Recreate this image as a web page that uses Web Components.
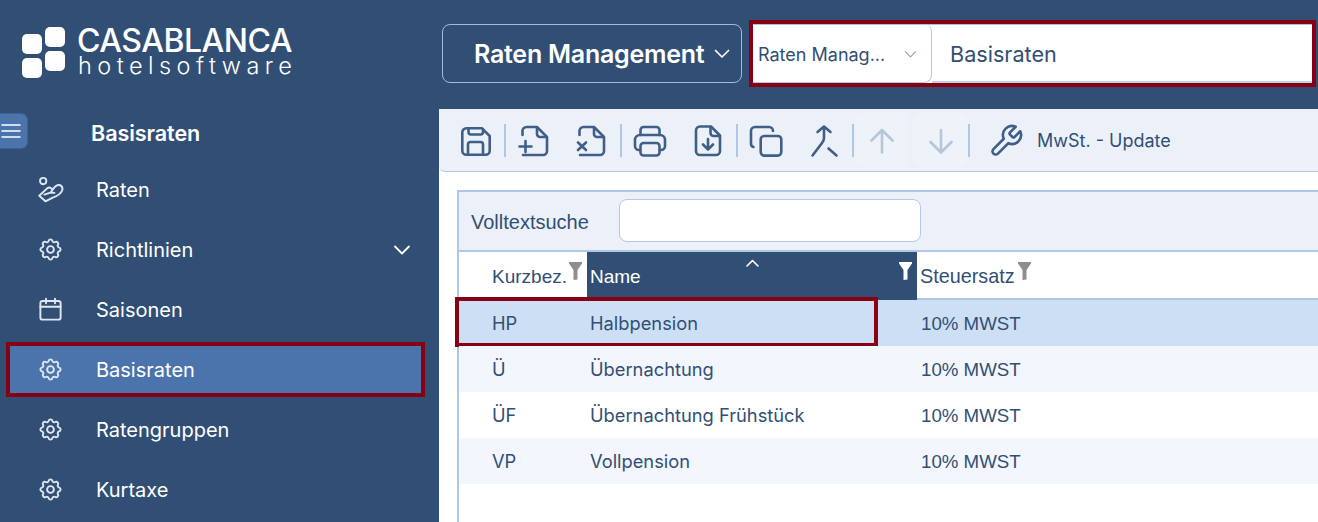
<!DOCTYPE html>
<html lang="de"><head><meta charset="utf-8"><title>Basisraten</title>
<style>
html,body{margin:0;height:100%;overflow:hidden}
body{background:#314f75;font-family:Inter,"Noto Sans",sans-serif;color:#314f75}
cb-app{height:522px}
</style></head><body>
<cb-app>
  <cb-sidebar slot="side">
    <cb-nav icon="hand">Raten</cb-nav>
    <cb-nav icon="gear" expand>Richtlinien</cb-nav>
    <cb-nav icon="cal">Saisonen</cb-nav>
    <cb-nav icon="gear" active>Basisraten</cb-nav>
    <cb-nav icon="gear">Ratengruppen</cb-nav>
    <cb-nav icon="gear">Kurtaxe</cb-nav>
  </cb-sidebar>
  <cb-topbar slot="top"></cb-topbar>
  <cb-toolbar slot="tools"></cb-toolbar>
  <cb-grid slot="main">
    <cb-row cells='["HP","Halbpension","10% MWST"]' selected marked></cb-row>
    <cb-row cells='["Ü","Übernachtung","10% MWST"]' tint></cb-row>
    <cb-row cells='["ÜF","Übernachtung Frühstück","10% MWST"]'></cb-row>
    <cb-row cells='["VP","Vollpension","10% MWST"]' tint></cb-row>
  </cb-grid>
</cb-app>
<script>
const svg=(w,h,vb,body,sw=2)=>`<svg width="${w}" height="${h}" viewBox="${vb}" fill="none" stroke="currentColor" stroke-width="${sw}" stroke-linecap="round" stroke-linejoin="round">${body}</svg>`;
const GEAR='<path d="M10.325 4.317c.426-1.756 2.924-1.756 3.35 0a1.724 1.724 0 0 0 2.573 1.066c1.543-.94 3.31.826 2.37 2.37a1.724 1.724 0 0 0 1.065 2.572c1.756.426 1.756 2.924 0 3.35a1.724 1.724 0 0 0-1.066 2.573c.94 1.543-.826 3.31-2.37 2.37a1.724 1.724 0 0 0-2.572 1.065c-.426 1.756-2.924 1.756-3.35 0a1.724 1.724 0 0 0-2.573-1.066c-1.543.94-3.31-.826-2.37-2.37a1.724 1.724 0 0 0-1.065-2.572c-1.756-.426-1.756-2.924 0-3.35a1.724 1.724 0 0 0 1.066-2.573c-.94-1.543.826-3.31 2.37-2.37 1 .608 2.296.07 2.572-1.065z"/><circle cx="12" cy="12" r="3"/>';
const ICONS={
 gear:GEAR,
 cal:'<rect x="3" y="4.5" width="18" height="16.5" rx="2"/><path d="M3 9.5h18M8 2.5v4M16 2.5v4"/>',
 hand:'<circle cx="5.5" cy="4.5" r="2.8"/><path d="M2 17.5L9 11q2-1.500 3.500-.2L14 12q3-4.500 6-4 3.500 1.200 2.300 5-1.800 4-8.300 6.200l-6.500 3.300z"/><path d="M6.500 16.5l5.500-1.800 2-2.700M12 14.7l3.500.3"/>'
};
const def=(name,cls)=>customElements.define(name,cls);
class Base extends HTMLElement{
  render(html){ if(!this.shadowRoot) this.attachShadow({mode:'open'}); this.shadowRoot.innerHTML=html; }
}
def('cb-app',class extends Base{connectedCallback(){this.render(`<style>
:host{display:grid;grid-template-columns:439px 1fr;grid-template-rows:109px 1fr;height:522px;overflow:hidden}
.side{grid-row:1 / 3}
.work{display:flex;flex-direction:column;min-width:0;background:#fff;overflow:hidden}
.top{min-width:0}
</style><div class="side"><slot name="side"></slot></div><div class="top"><slot name="top"></slot></div>
<div class="work"><slot name="tools"></slot><slot name="main"></slot></div>`)}});

def('cb-logo',class extends Base{connectedCallback(){this.render(`<style>
:host{display:flex;align-items:flex-start;box-sizing:border-box;height:113px;padding:27px 0 0 22px;color:#fff}
.mark{display:flex;gap:3px;width:43px;flex:none}
.mark div{display:flex;flex-direction:column;gap:4px}
.mark div:first-child{margin-top:7px}
.mark i{background:#fff;border-radius:5px;display:block;width:20px;height:20px}
.col{display:flex;flex-direction:column;margin:0 0 0 12px}
.l1{font-size:32px;font-weight:500;line-height:28px;letter-spacing:-.5px;white-space:nowrap}
.l2{font-size:23.5px;font-weight:300;line-height:24px;letter-spacing:5.45px;white-space:nowrap;margin-top:-1px;margin-left:1px}
</style><div class="mark"><div><i></i><i></i></div><div><i></i><i></i></div></div>
<div class="col"><span class="l1">CASABLANCA</span><span class="l2">hotelsoftware</span></div>`)}});

def('cb-sidebar',class extends Base{connectedCallback(){this.render(`<style>
:host{display:block;height:522px;background:#314f75;overflow:hidden;color:#fff}
.head{display:flex;align-items:center;height:36px}
.burger{width:28px;height:36px;box-sizing:border-box;background:#4c74ac;border:1px solid #3f6291;border-left:0;border-radius:0 7px 7px 0;display:flex;align-items:center;padding-left:1px;color:#fff}
.title{margin-left:63px;font-size:21.6px;font-weight:600;letter-spacing:-.1px;line-height:24px;margin-top:4px}
nav{display:flex;flex-direction:column;gap:5px;margin-top:13px}
</style><cb-logo></cb-logo>
<div class="head"><div class="burger">${svg(20,20,'0 0 20 20','<path d="M1 4h18M1 10h18M1 16h18"/>',1.6)}</div><div class="title">Basisraten</div></div>
<nav><slot></slot></nav>`)}});

def('cb-nav',class extends Base{connectedCallback(){
 const ic=this.getAttribute('icon');
 this.render(`<style>
:host{display:block;margin-left:6px;width:419px;height:55px;box-sizing:border-box;border:4px solid transparent;color:#fff}
:host([active]){border-color:#870013;background:#4c74ac}
.r{display:flex;align-items:center;height:100%;padding-left:27px;font-size:20px;line-height:24px}
.i{width:27px;height:27px;color:#dfe7f2;display:flex;flex:none;margin-top:-1px}
.t{margin-left:32px;flex:1}
.c{margin-right:10px;display:flex}
</style><div class="r"><span class="i">${svg(27,27,'0 0 24 24',ICONS[ic],1.7)}</span><span class="t"><slot></slot></span>
${this.hasAttribute('expand')?`<span class="c">${svg(18,18,'0 0 18 18','<path d="M2 5.5l7 7 7-7"/>',1.8)}</span>`:''}</div>`)}});

def('cb-topbar',class extends Base{connectedCallback(){this.render(`<style>
:host{display:flex;height:109px;box-sizing:border-box;padding:20px 0 0 3px;align-items:flex-start;background:#314f75}
.dd{margin-top:4px;width:300px;height:59px;box-sizing:border-box;border:1.5px solid #a3bbdb;border-radius:8px;display:flex;align-items:center;padding-left:31px;color:#fff;font-size:25px;font-weight:600;letter-spacing:-.25px;white-space:nowrap}
.chev{display:flex;margin-left:10px}
.mark{margin-left:7px;width:567px;height:67px;box-sizing:border-box;border:4px solid #870013;display:flex;background:#fff;box-shadow:inset 0 1px 0 #a9c2e3}
.sel{width:179px;box-sizing:border-box;border-right:1px solid #b3c8e4;border-bottom:1px solid #b3c8e4;border-radius:0 8px 8px 0;display:flex;align-items:center;padding:2px 0 0 5px;font-size:18px;color:#314f75;white-space:nowrap}
.sel span{width:140px;overflow:hidden}
.sel svg{margin-left:6px;color:#8a9bb1}
.val{flex:1;display:flex;align-items:center;padding:2px 0 0 18px;font-size:21.6px;color:#314f75;border-bottom:2px solid #c0d2e9}
</style><div class="dd"><span>Raten Management</span><span class="chev">${svg(16,16,'0 0 16 16','<path d="M1.5 4.5L8 11l6.5-6.5"/>',1.7)}</span></div>
<div class="mark"><div class="sel"><span>Raten Manag...</span>${svg(13,13,'0 0 14 14','<path d="M1.5 4L7 9.5 12.5 4"/>',1.1)}</div><div class="val">Basisraten</div></div>`)}});

const T={
 save:'<path d="M8.3 5.3H24L31.7 13v14.7a4 4 0 0 1-4 4H8.3a4 4 0 0 1-4-4V9.3a4 4 0 0 1 4-4z"/><path d="M10.5 5.5V9a2.5 2.5 0 0 0 2.5 2.5h9.5A2.5 2.5 0 0 0 25 9V6M10 31.5v-10a2.5 2.5 0 0 1 2.5-2.500h10a2.5 2.5 0 0 1 2.5 2.5v10"/>',
 add:'<path d="M6.5 12V8a4 4 0 0 1 4-4H21l10 10v14a4 4 0 0 1-4 4H7"/><path d="M21 5v6a3 3 0 0 0 3 3h6M3.5 23.5h12M9.5 18v11"/>',
 del:'<path d="M6.5 12V8a4 4 0 0 1 4-4H21l10 10v14a4 4 0 0 1-4 4H7"/><path d="M21 5v6a3 3 0 0 0 3 3h6M5 19.5l8 7.5M13 19.5L5 27"/>',
 print:'<path d="M8.5 12V7a3 3 0 0 1 3-3h13a3 3 0 0 1 3 3v5"/><path d="M8 27H7a4 4 0 0 1-4-4v-6a5 5 0 0 1 5-5h20a5 5 0 0 1 5 5v6a4 4 0 0 1-4 4h-1"/><rect x="8.5" y="20" width="19" height="12.5" rx="3"/>',
 down:'<path d="M21 3.5H10a4 4 0 0 0-4 4V28a4 4 0 0 0 4 4h16a4 4 0 0 0 4-4V12.5z"/><path d="M20.5 4v6a3 3 0 0 0 3 3h6M18 16v10M13 21.5l5 5 5-5"/>',
 copy:'<rect x="12.7" y="13" width="20.6" height="19.6" rx="3.5"/><path d="M5.5 24A3 3 0 0 1 3 21V8a4 4 0 0 1 4-4h14a4 4 0 0 1 4 4"/>',
 merge:'<path d="M11.5 9L18 3.5 24.5 9M18 3.5V15c0 2-.8 3.5-2 5L6.5 32.5M22.5 25.5l8 7"/>',
 up:'<path d="M18 7v22.5M7.5 17.5L18 7l10.5 10.5"/>',
 dn:'<path d="M18 29.5V7M7.5 19L18 29.5 28.5 19"/>',
 wrench:'<path transform="scale(1.5)" stroke-width="1.75" d="M14.7 6.3a1 1 0 0 0 0 1.4l1.6 1.6a1 1 0 0 0 1.4 0l3.77-3.77a6 6 0 0 1-7.94 7.94l-6.91 6.91a2.12 2.12 0 0 1-3-3l6.91-6.91a6 6 0 0 1 7.94-7.94l-3.76 3.76z"/>'
};
def('cb-tool',class extends Base{connectedCallback(){
 const n=this.getAttribute('n');
 this.render(`<style>
:host{display:flex;align-items:center;justify-content:center;flex:none;width:${this.getAttribute('w')||46}px;height:54px;color:#3f5f88;border-radius:8px;margin-left:${this.getAttribute('ml')||0}px}
:host([disabled]){color:#b5c5da;background:#eef2f9}
svg{margin-top:2px;flex:none}
</style>${svg(36,36,'0 0 36 36',T[n],2.6)}`)}});
def('cb-toolbar',class extends Base{connectedCallback(){this.render(`<style>
:host{display:flex;align-items:center;flex:none;height:63px;box-sizing:border-box;padding-left:13px;background:#ecf1f9;border-bottom:1px solid #b4c9e4;border-radius:0 0 0 6px}
.s{width:2px;height:33px;background:#afc6e4;flex:none;margin-top:1px}
.t{font-size:18px;color:#314f75;margin-left:14px;white-space:nowrap;margin-top:1px}
</style>
<cb-tool n="save" w="48"></cb-tool><div class="s" style="margin-left:4px"></div>
<cb-tool n="add" w="56"></cb-tool><cb-tool n="del" w="58"></cb-tool><div class="s"></div>
<cb-tool n="print" w="56"></cb-tool><cb-tool n="down" w="56" ml="2"></cb-tool><div class="s"></div>
<cb-tool n="copy" w="55"></cb-tool><cb-tool n="merge" w="57" ml="2"></cb-tool><div class="s"></div>
<cb-tool n="up" disabled w="53" ml="1"></cb-tool><cb-tool n="dn" disabled w="55" ml="5"></cb-tool><div class="s"></div>
<cb-tool n="wrench" w="34" ml="19"></cb-tool><span class="t">MwSt. - Update</span>`)}});

const FILTER=c=>`<svg width="13" height="18" viewBox="0 0 13 18" style="color:${c};flex:none"><path fill="currentColor" d="M0 0h13v1.500L8.500 8v9.500L4.500 18V8L0 1.500z"/></svg>`;
def('cb-grid',class extends Base{connectedCallback(){this.render(`<style>
:host{display:block;flex:1;margin:18px 0 0 18px;border-left:2px solid #afc8e6;border-top:2px solid #afc8e6;background:#fff;min-height:0}
.search{display:flex;align-items:center;height:58px;background:#ecf1f9;border-bottom:2px solid #afc8e6;padding-left:12px;color:#314f75;font-family:"Liberation Sans",sans-serif;font-size:20px}
.search span{width:148px;flex:none;margin-top:3px}
.search input{display:block;margin-top:-1px;width:302px;height:43px;box-sizing:border-box;border:1.5px solid #b3c9e6;border-radius:8px;background:#fff;outline:0}
.head{display:grid;grid-template-columns:128px 330px 1fr;height:46px;background:#fff;border-bottom:2px solid #afc8e6;font-family:"Liberation Sans",sans-serif;font-size:19px;color:#314f75}
.h{display:flex;align-items:flex-end;position:relative;padding-bottom:11px;line-height:22px}
.k{padding-left:33px;padding-bottom:10px}
.k svg{margin:0 0 8px 2px}
.n{background:#314f75;color:#fff;padding-left:3px;margin-bottom:-2px;padding-bottom:12px;justify-content:space-between;padding-right:5px}
.n>svg{margin-bottom:8px}
.caret{position:absolute;left:159px;top:7px;color:#fff;display:flex}
.st{padding-left:3px;font-size:19.8px}
.st svg{margin:0 0 7px 3px}
</style>
<div class="search"><span>Volltextsuche</span><input type="text" aria-label="Volltextsuche"></div>
<div class="head">
 <div class="h k">Kurzbez.${FILTER('#8f8f8f')}</div>
 <div class="h n"><span>Name</span><span class="caret">${svg(13,8,'0 0 13 8','<path d="M1 7l5.5-5.5L12 7"/>',1.6)}</span>${FILTER('#fff')}</div>
 <div class="h st">Steuersatz${FILTER('#8f8f8f')}</div>
</div>
<slot></slot>`)}});

def('cb-row',class extends Base{connectedCallback(){
 const c=JSON.parse(this.getAttribute('cells'));
 this.render(`<style>
:host{display:grid;grid-template-columns:128px 330px 1fr;height:46px;align-items:center;background:#fff;color:#314f75;font-size:18.3px;position:relative}
:host([tint]){background:#f3f6fc}
:host([selected]){background:#cddff4}
.a{padding-left:33px}.b{padding-left:3px}.c{padding:1px 0 0 4px;font-size:18.7px;font-family:"Liberation Sans",sans-serif}
.mk{position:absolute;left:-4px;top:-3px;width:423px;height:50px;box-sizing:border-box;border:4px solid #870013}
</style><span class="a">${c[0]}</span><span class="b">${c[1]}</span><span class="c">${c[2]}</span>
${this.hasAttribute('marked')?'<div class="mk"></div>':''}`)}});
</script>
</body></html>
